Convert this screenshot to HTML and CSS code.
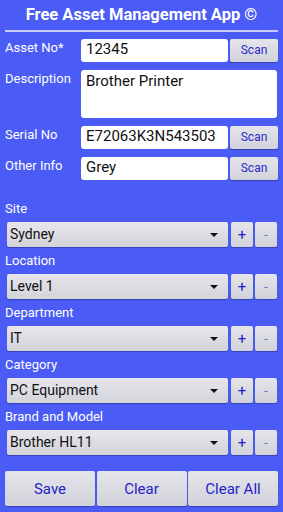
FILE: index.html
```html
<!DOCTYPE html>
<html>
<head>
<meta charset="utf-8">
<link rel="stylesheet" href="styles.css">
</head>
<body>
<div class="app">
  <div class="title">Free Asset Management App ©</div>
  <div class="rule"></div>

  <div class="row">
    <div class="label">Asset No*</div>
    <input class="field" value="12345">
    <div class="btn scan">Scan</div>
  </div>
  <div class="row tall">
    <div class="label">Description</div>
    <textarea class="field area">Brother Printer</textarea>
  </div>
  <div class="row">
    <div class="label">Serial No</div>
    <input class="field" value="E72063K3N543503">
    <div class="btn scan">Scan</div>
  </div>
  <div class="row">
    <div class="label">Other Info</div>
    <input class="field" value="Grey">
    <div class="btn scan">Scan</div>
  </div>

  <div class="picks">
    <div class="pick">
      <div class="plabel">Site</div>
      <div class="prow">
        <div class="select"><span class="val">Sydney</span><span class="caret"></span></div>
        <div class="btn sq plus">+</div>
        <div class="btn sq minus">-</div>
      </div>
    </div>
    <div class="pick">
      <div class="plabel">Location</div>
      <div class="prow">
        <div class="select"><span class="val">Level 1</span><span class="caret"></span></div>
        <div class="btn sq plus">+</div>
        <div class="btn sq minus">-</div>
      </div>
    </div>
    <div class="pick">
      <div class="plabel">Department</div>
      <div class="prow">
        <div class="select"><span class="val">IT</span><span class="caret"></span></div>
        <div class="btn sq plus">+</div>
        <div class="btn sq minus">-</div>
      </div>
    </div>
    <div class="pick">
      <div class="plabel">Category</div>
      <div class="prow">
        <div class="select"><span class="val">PC Equipment</span><span class="caret"></span></div>
        <div class="btn sq plus">+</div>
        <div class="btn sq minus">-</div>
      </div>
    </div>
    <div class="pick">
      <div class="plabel">Brand and Model</div>
      <div class="prow">
        <div class="select"><span class="val">Brother HL11</span><span class="caret"></span></div>
        <div class="btn sq plus">+</div>
        <div class="btn sq minus">-</div>
      </div>
    </div>
  </div>

  <div class="actions">
    <div class="btn big">Save</div>
    <div class="btn big">Clear</div>
    <div class="btn big">Clear All</div>
  </div>
</div>
</body>
</html>
```
FILE: styles.css
```css
html, body {
  margin: 0;
  padding: 0;
  background: #4a5cf5;
}
body {
  font-family: Roboto, "Liberation Sans", sans-serif;
  width: 283px;
  height: 512px;
  overflow: hidden;
}
.app {
  padding: 0 5px;
}
.title {
  height: 30px;
  line-height: 30px;
  text-align: center;
  color: #ffffff;
  font-weight: bold;
  font-size: 16.5px;
}
.rule {
  height: 1.5px;
  background: #c3c9fa;
  margin-bottom: 7px;
}
.row {
  display: flex;
  align-items: flex-start;
  height: 23px;
  margin-bottom: 8px;
}
.row.tall {
  height: 48px;
}
.label {
  width: 76px;
  flex: none;
  color: #ffffff;
  font-size: 13px;
  line-height: 17px;
}
.field {
  box-sizing: border-box;
  width: 147px;
  height: 23px;
  flex: none;
  border: none;
  border-radius: 3px;
  background: #ffffff;
  padding: 0 5px;
  margin: 0;
  font-family: Roboto, "Liberation Sans", sans-serif;
  font-size: 15px;
  line-height: 20px;
  color: #111111;
  outline: none;
}
input.field {
  padding-bottom: 3px;
}
.area {
  width: 196px;
  height: 48px;
  resize: none;
  overflow: hidden;
  padding-top: 1px;
}
.btn {
  box-sizing: border-box;
  background: linear-gradient(#e4e4ea, #d2d2da);
  border-radius: 2px;
  box-shadow: 0 1px 1px rgba(30, 30, 90, 0.45);
  color: #2b2bcc;
  display: flex;
  align-items: center;
  justify-content: center;
}
.scan {
  width: 48px;
  height: 23px;
  margin-left: 2px;
  font-size: 12px;
}
.picks {
  margin-top: 15.5px;
}
.pick {
  height: 52px;
}
.plabel {
  height: 27px;
  line-height: 27px;
  color: #ffffff;
  font-size: 13px;
}
.prow {
  display: flex;
  height: 25px;
  padding-left: 2px;
}
.select {
  box-sizing: border-box;
  width: 221px;
  height: 25px;
  background: linear-gradient(#e6e6eb, #d3d3da);
  border-radius: 2px;
  box-shadow: 0 1px 1px rgba(30, 30, 90, 0.45);
  display: flex;
  align-items: center;
  padding: 0 0 1px 3px;
  font-size: 14px;
  color: #111111;
}
.val {
  flex: 1;
}
.caret {
  width: 0;
  height: 0;
  border-left: 4.5px solid transparent;
  border-right: 4.5px solid transparent;
  border-top: 4px solid #111111;
  margin-right: 10px;
  margin-top: 2px;
}
.sq {
  width: 22px;
  height: 25px;
  font-size: 13px;
}
.plus {
  margin-left: 3px;
  color: #1f1fd0;
  font-size: 15px;
}
.minus {
  margin-left: 2px;
  color: #5a6ad8;
}
.actions {
  display: flex;
  gap: 1.5px;
  margin-top: 16px;
}
.big {
  flex: 1;
  height: 35px;
  font-size: 15px;
  color: #2424c8;
}
```
